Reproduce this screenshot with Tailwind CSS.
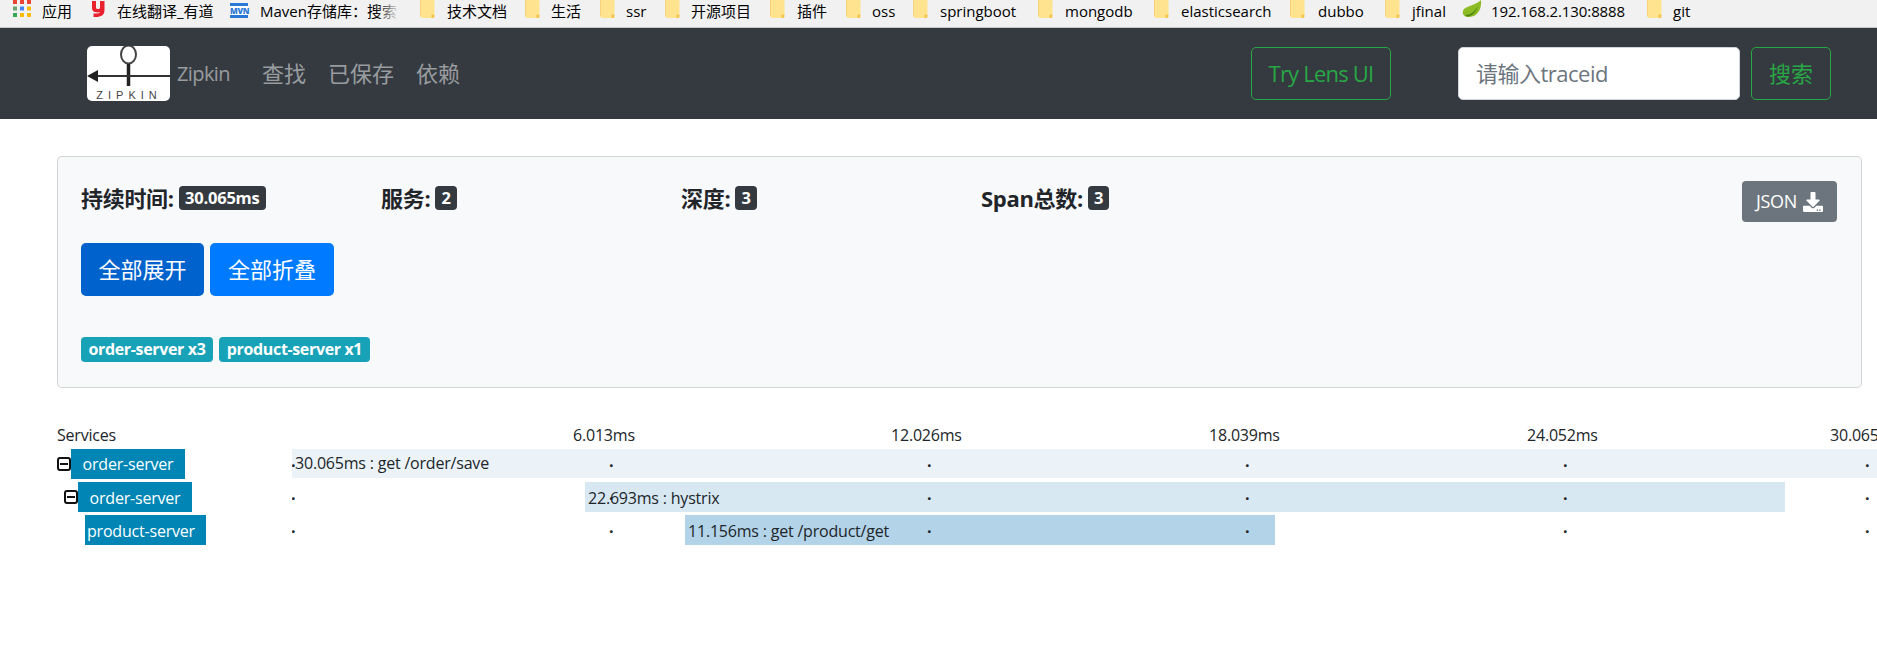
<!DOCTYPE html>
<html>
<head>
<meta charset="utf-8">
<script src="https://cdn.jsdelivr.net/npm/@tailwindcss/browser@4"></script>
</head>
<body class="bg-white overflow-hidden h-[656px] font-['Open_Sans','Noto_Sans_CJK_SC',sans-serif] text-[#212529]">
<svg class="hidden"><defs><symbol id="folder" viewBox="0 0 15 18"><path d="M1 0H14.500V14L13 15.500V18H2.500C1.500 18 .5 17 .5 16V.5Z" fill="#ffe38f"/><path d="M11.500 14.500H14.500V16.500C14.500 17.500 13.500 18 12.500 18H11.500Z" fill="#f6c548"/><path d="M.5 0V16.500" stroke="#f6d27a" stroke-width="1"/></symbol></defs></svg>
<div class="h-[28px] bg-[#f1f1f1] border-b border-[#c8c8c8] flex items-center pl-[13px] pb-[5px] text-[15px] text-black whitespace-nowrap overflow-hidden">
  <svg class="w-[18px] h-[17px] mr-[11px] -mt-[5px]" viewBox="0 0 18 17"><rect x="0" y="0" width="4" height="4" fill="#ea4335"/><rect x="7" y="0" width="4" height="4" fill="#ea4335"/><rect x="14" y="0" width="4" height="4" fill="#ea4335"/><rect x="0" y="6.500" width="4" height="4" fill="#6aa36f"/><rect x="7" y="6.500" width="4" height="4" fill="#4285f4"/><rect x="14" y="6.500" width="4" height="4" fill="#fbbc05"/><rect x="0" y="13" width="4" height="4" fill="#34a853"/><rect x="7" y="13" width="4" height="4" fill="#fbbc05"/><rect x="14" y="13" width="4" height="4" fill="#fbbc05"/></svg>
  <span class="w-[30px] mr-[19px]">应用</span>
  <svg class="w-[14px] h-[16px] mr-[12px] -mt-[5px]" viewBox="0 0 14 16"><path d="M1 0H5V6.500C5 7.500 6 8 7 8 8 8 9 7.500 9 6.500V0H13.500V9C13.500 14 10 16 5 16H2.500V12.500H5C7 12.500 8.500 12 9 11 6 12 1 11.500 1 7Z" fill="#e8212e"/></svg>
  <span class="w-[96px] mr-[17px]">在线翻译_有道</span>
  <span class="w-[18px] h-[15px] mr-[12px] -mt-[1px] bg-white border-y-[3px] border-[#2a78d6] text-[8px] leading-[9px] font-extrabold text-[#2a78d6] text-center tracking-[-0.3px]">MVN</span>
  <span class="relative w-[140px] mr-[20px] overflow-hidden">Maven存储库：搜索<span class="absolute right-0 top-0 bottom-0 w-[24px] bg-linear-to-r from-transparent to-[#f1f1f1]"></span></span>
  <svg class="w-[15px] h-[18px] mr-[12px] -mt-[5px]"><use href="#folder"/></svg><span class="w-[60px] mr-[18px]">技术文档</span>
  <svg class="w-[15px] h-[18px] mr-[11px] -mt-[5px]"><use href="#folder"/></svg><span class="w-[31px] mr-[18px]">生活</span>
  <svg class="w-[15px] h-[18px] mr-[11px] -mt-[5px]"><use href="#folder"/></svg><span class="w-[19px] mr-[20px]">ssr</span>
  <svg class="w-[15px] h-[18px] mr-[11px] -mt-[5px]"><use href="#folder"/></svg><span class="w-[60px] mr-[19px]">开源项目</span>
  <svg class="w-[15px] h-[18px] mr-[12px] -mt-[5px]"><use href="#folder"/></svg><span class="w-[31px] mr-[18px]">插件</span>
  <svg class="w-[15px] h-[18px] mr-[11px] -mt-[5px]"><use href="#folder"/></svg><span class="w-[23px] mr-[18px]">oss</span>
  <svg class="w-[15px] h-[18px] mr-[12px] -mt-[5px]"><use href="#folder"/></svg><span class="w-[79px] mr-[19px]">springboot</span>
  <svg class="w-[15px] h-[18px] mr-[12px] -mt-[5px]"><use href="#folder"/></svg><span class="w-[71px] mr-[18px]">mongodb</span>
  <svg class="w-[15px] h-[18px] mr-[12px] -mt-[5px]"><use href="#folder"/></svg><span class="w-[91px] mr-[18px]">elasticsearch</span>
  <svg class="w-[15px] h-[18px] mr-[13px] -mt-[5px]"><use href="#folder"/></svg><span class="w-[47px] mr-[20px]">dubbo</span>
  <svg class="w-[15px] h-[18px] mr-[12px] -mt-[5px]"><use href="#folder"/></svg><span class="w-[34px] mr-[16px]">jfinal</span>
  <svg class="w-[20px] h-[18px] mr-[9px] -mt-[5px]" viewBox="0 0 20 18"><path d="M19 0C20 8 16 17 7 17 3 17 0 15 1 11 2 6 13 6 19 0Z" fill="#8dbb25"/><path d="M3 15C8 15 13 12 16 6 14 13 9 17 5 16.500Z" fill="#4f8a10"/></svg>
  <span class="w-[138px] mr-[18px] tracking-[-0.1px]">192.168.2.130:8888</span>
  <svg class="w-[15px] h-[18px] mr-[11px] -mt-[5px]"><use href="#folder"/></svg><span>git</span>
</div>

<nav class="h-[91px] bg-[#343a40] flex items-center pl-[87px] pr-[47px] text-[22px]">
  <svg class="w-[83px] h-[55px] rounded-[5px] bg-white shrink-0" viewBox="0 0 83 55">
    <ellipse cx="41.500" cy="8.500" rx="7.500" ry="9" fill="none" stroke="#444" stroke-width="2"/>
    <path d="M41.500 18V40" stroke="#222" stroke-width="3.500"/>
    <path d="M6 30H83" stroke="#333" stroke-width="2"/>
    <path d="M0 30L11 24V36Z" fill="#222"/>
    <text x="42" y="53" text-anchor="middle" font-size="11" letter-spacing="5" fill="#444" font-family="Liberation Sans">ZIPKIN</text>
  </svg>
  <span class="ml-[7px] text-[20px] tracking-[-0.6px] text-white/50 w-[85px]">Zipkin</span>
  <a class="text-white/50 mr-[22px]">查找</a>
  <a class="text-white/50 mr-[22px]">已保存</a>
  <a class="text-white/50">依赖</a>
  <a class="ml-auto w-[140px] h-[53px] flex items-center justify-center border border-[#28a745] rounded-[5px] text-[#28a745] tracking-[-0.8px]">Try Lens UI</a>
  <div class="ml-[67px] w-[282px] h-[53px] bg-white border border-[#ced4da] rounded-[5px] flex items-center pl-[17px] text-[#6c757d] tracking-[-0.5px]">请输入traceid</div>
  <a class="ml-[11px] w-[80px] -mr-[1px] h-[53px] flex items-center justify-center border border-[#28a745] rounded-[5px] text-[#28a745]">搜索</a>
</nav>

<main class="pl-[57px] pt-[37px]">
  <section class="w-[1805px] h-[232px] bg-[#f8f9fa] border border-black/15 rounded-[5px] pl-[23px] pr-[24px] pt-[23px]">
    <div class="flex h-[41px] items-start">
      <div class="w-[300px] flex items-center gap-[5px] h-[36px] text-[22px] font-bold tracking-[-0.3px]">持续时间:<span class="w-[87px] text-center bg-[#343a40] text-white text-[16.500px] tracking-[-0.2px] h-[24px] leading-[24px] rounded-[4px]">30.065ms</span></div>
      <div class="w-[300px] flex items-center gap-[5px] h-[36px] text-[22px] font-bold tracking-[-0.3px]">服务:<span class="bg-[#343a40] text-white text-[16.500px] h-[24px] leading-[24px] px-[6px] rounded-[4px]">2</span></div>
      <div class="w-[300px] flex items-center gap-[5px] h-[36px] text-[22px] font-bold tracking-[-0.3px]">深度:<span class="bg-[#343a40] text-white text-[16.500px] h-[24px] leading-[24px] px-[6px] rounded-[4px]">3</span></div>
      <div class="w-[300px] flex items-center gap-[5px] h-[36px] text-[22px] font-bold tracking-[-0.3px]">Span总数:<span class="bg-[#343a40] text-white text-[16.500px] h-[24px] leading-[24px] px-[6px] rounded-[4px]">3</span></div>
      <button class="ml-auto w-[95px] h-[41px] mt-[1px] bg-[#6c757d] text-white rounded-[4px] flex items-center justify-center gap-[6px] text-[18px] tracking-[-0.3px]">JSON
        <svg class="w-[20px] h-[20px]" viewBox="0 0 512 512" fill="#fff"><path d="M216 0h80c13.300 0 24 10.700 24 24v168h87.700c17.800 0 26.700 21.500 14.100 34.100L269.700 378.300c-7.500 7.500-19.800 7.500-27.300 0L90.100 226.100c-12.600-12.600-3.700-34.100 14.100-34.100H192V24c0-13.300 10.700-24 24-24zm296 376v112c0 13.300-10.700 24-24 24H24c-13.300 0-24-10.700-24-24V376c0-13.300 10.700-24 24-24h146.700l49 49c20.100 20.100 52.500 20.100 72.600 0l49-49H488c13.300 0 24 10.700 24 24zm-124 88c0-11-9-20-20-20s-20 9-20 20 9 20 20 20 20-9 20-20zm64 0c0-11-9-20-20-20s-20 9-20 20 9 20 20 20 20-9 20-20z"/></svg>
      </button>
    </div>
    <div class="flex gap-[6px] mt-[22px]">
      <button class="w-[123px] h-[53px] bg-[#0062cc] text-white rounded-[5px] text-[22px]">全部展开</button>
      <button class="w-[124px] h-[53px] bg-[#007bff] text-white rounded-[5px] text-[22px]">全部折叠</button>
    </div>
    <div class="flex gap-[6px] mt-[41px]">
      <span class="w-[132px] h-[25px] bg-[#17a2b8] text-white font-bold text-[16px] tracking-[-0.35px] leading-[25px] text-center rounded-[4px]">order-server x3</span>
      <span class="w-[151px] h-[25px] bg-[#17a2b8] text-white font-bold text-[16px] tracking-[-0.35px] leading-[25px] text-center rounded-[4px]">product-server x1</span>
    </div>
  </section>

  <section class="mt-[36px] text-[16px] whitespace-nowrap tracking-[-0.2px]">
    <div class="flex h-[25px] items-center -mt-[1px] mb-[1px]">
      <div class="w-[235px] pb-[2px]">Services</div>
      <div class="relative flex-1 h-full">
        <span class="absolute left-[281px]">6.013ms</span>
        <span class="absolute left-[599px]">12.026ms</span>
        <span class="absolute left-[917px]">18.039ms</span>
        <span class="absolute left-[1235px]">24.052ms</span>
        <span class="absolute left-[1538px]">30.065ms</span>
      </div>
    </div>
    <div class="flex h-[30px] mb-[3px]">
      <div class="w-[235px] flex items-center">
        <svg class="w-[14px] h-[14px] shrink-0" viewBox="0 0 14 14"><rect x="1" y="1" width="12" height="12" rx="2" fill="#fff" stroke="#111" stroke-width="2"/><path d="M3 7H11" stroke="#111" stroke-width="2"/></svg>
        <span class="w-[114px] h-full bg-[#0085b5] text-white text-center leading-[30px]">order-server</span>
      </div>
      <div class="relative flex-1 overflow-hidden">
        <div class="absolute top-0 bottom-[1px] bg-[#ebf3f9] leading-[29px] pl-[3px]" style="left:0;width:1585px">30.065ms : get /order/save</div>
        <span class="absolute -left-[1px] top-[4px] font-bold">·</span><span class="absolute left-[317px] top-[4px] font-bold">·</span><span class="absolute left-[635px] top-[4px] font-bold">·</span><span class="absolute left-[953px] top-[4px] font-bold">·</span><span class="absolute left-[1271px] top-[4px] font-bold">·</span><span class="absolute left-[1573px] top-[4px] font-bold">·</span>
      </div>
    </div>
    <div class="flex h-[30px] mb-[3px]">
      <div class="w-[235px] flex items-center pl-[7px]">
        <svg class="w-[14px] h-[14px] shrink-0" viewBox="0 0 14 14"><rect x="1" y="1" width="12" height="12" rx="2" fill="#fff" stroke="#111" stroke-width="2"/><path d="M3 7H11" stroke="#111" stroke-width="2"/></svg>
        <span class="w-[114px] h-full bg-[#0085b5] text-white text-center leading-[32px]">order-server</span>
      </div>
      <div class="relative flex-1 overflow-hidden">
        <div class="absolute top-0 bottom-0 bg-[#d8e8f3] leading-[32px] pl-[3px]" style="left:293px;width:1200px">22.693ms : hystrix</div>
        <span class="absolute -left-[1px] top-[4px] font-bold">·</span><span class="absolute left-[317px] top-[4px] font-bold">·</span><span class="absolute left-[635px] top-[4px] font-bold">·</span><span class="absolute left-[953px] top-[4px] font-bold">·</span><span class="absolute left-[1271px] top-[4px] font-bold">·</span><span class="absolute left-[1573px] top-[4px] font-bold">·</span>
      </div>
    </div>
    <div class="flex h-[30px]">
      <div class="w-[235px] flex items-center pl-[28px]">
        <span class="w-[121px] h-full bg-[#0085b5] text-white pl-[2px] leading-[32px]">product-server</span>
      </div>
      <div class="relative flex-1 overflow-hidden">
        <div class="absolute top-0 bottom-0 bg-[#b2d3e8] leading-[32px] pl-[3px]" style="left:393px;width:590px">11.156ms : get /product/get</div>
        <span class="absolute -left-[1px] top-[4px] font-bold">·</span><span class="absolute left-[317px] top-[4px] font-bold">·</span><span class="absolute left-[635px] top-[4px] font-bold">·</span><span class="absolute left-[953px] top-[4px] font-bold">·</span><span class="absolute left-[1271px] top-[4px] font-bold">·</span><span class="absolute left-[1573px] top-[4px] font-bold">·</span>
      </div>
    </div>
  </section>
</main>
</body>
</html>
